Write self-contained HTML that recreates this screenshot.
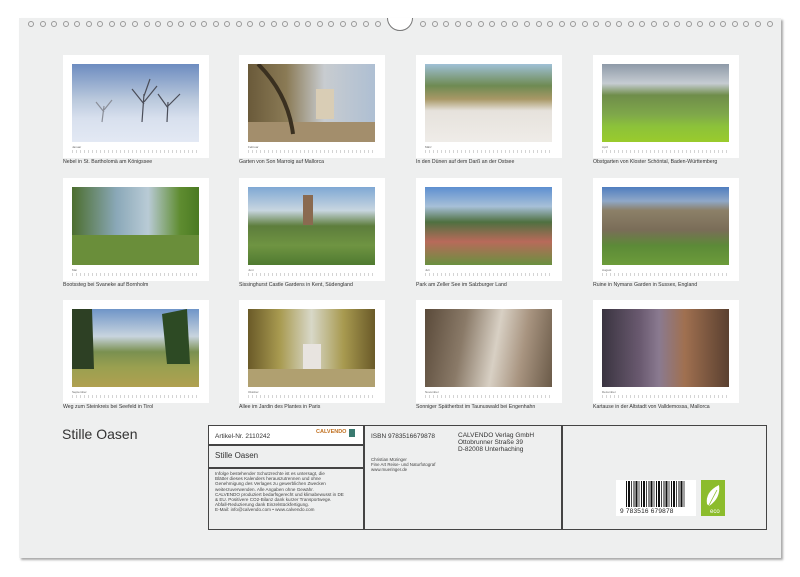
<!DOCTYPE html>
<html><head><meta charset="utf-8"><style>
*{margin:0;padding:0;box-sizing:border-box}
body{width:800px;height:577px;background:#fff;position:relative;overflow:hidden;font-family:"Liberation Sans",sans-serif;color:#333}
.page{position:absolute;left:19px;top:18px;width:762px;height:540px;background:#eeefef;box-shadow:2px 2px 2px #aaa}
.ring{position:absolute;top:21px;width:6px;height:6px;border:1px solid #999;border-radius:50%}
.notch{position:absolute;left:387px;top:5px;width:26px;height:26px;border-radius:50%;border:1px solid #777;background:#fff;clip-path:inset(13px 0 0 0)}
.card{position:absolute;width:146px;height:103px;background:#fff}
.img{position:absolute;left:9px;top:9px;width:127px;height:78px}
.cal{position:absolute;left:9px;top:90px;width:127px;height:9px;font-size:3px;color:#666}
.cal:after{content:"";position:absolute;left:0;right:0;top:5px;height:3px;background:repeating-linear-gradient(90deg,#aaa 0 1px,transparent 1px 4px);opacity:.5}
.cap{position:absolute;font-size:5.2px;color:#333;white-space:nowrap}
.box{position:absolute;border:1.5px solid #444}
.t{position:absolute;white-space:nowrap}
</style></head><body>
<div class="page"></div>
<div id="rings"></div>
<div class="notch"></div>
<script>
let h='';
for(let i=0;i<31;i++){h+=`<div class="ring" style="left:${28+i*11.55}px"></div>`}
for(let i=0;i<31;i++){h+=`<div class="ring" style="left:${420+i*11.55}px"></div>`}
document.getElementById('rings').innerHTML=h;
</script>
<div class="card" style="left:63px;top:55px"><div class="img" style="background:linear-gradient(180deg,#6d8cc0 0%,#b9c8dc 45%,#d8e0ee 70%,#e3e9f4 100%)"><svg width="127" height="78"><g stroke="#4a4d58" fill="none" stroke-width="1.2"><path d="M70 58 L72 30 M72 40 L60 25 M72 38 L85 22 M72 32 L78 15"/><path d="M95 58 L96 38 M96 44 L86 30 M96 42 L108 30"/><path d="M30 58 L32 42 M32 48 L24 38 M32 46 L40 36" stroke="#8a8e98"/></g></svg></div><div class="cal">Januar</div></div>
<div class="cap" style="left:63px;top:159px">Nebel in St. Bartholomä am Königssee</div>

<div class="card" style="left:239px;top:55px"><div class="img" style="background:linear-gradient(90deg,#6a5a3a 0%,#8a7a55 30%,#c8ccd0 60%,#aebfd3 100%)"><svg width="127" height="78"><rect x="68" y="25" width="18" height="30" fill="#d9cdb5"/><rect x="0" y="58" width="127" height="20" fill="#a38e6c"/><path d="M10 0 Q40 30 45 70" stroke="#3a3020" stroke-width="4" fill="none"/></svg></div><div class="cal">Februar</div></div>
<div class="cap" style="left:239px;top:159px">Garten von Son Marroig auf Mallorca</div>

<div class="card" style="left:416px;top:55px"><div class="img" style="background:linear-gradient(180deg,#9fc0d6 0%,#6e8a52 28%,#a89866 45%,#e6e2dc 60%,#efece8 100%)"></div><div class="cal">März</div></div>
<div class="cap" style="left:416px;top:159px">In den Dünen auf dem Darß an der Ostsee</div>

<div class="card" style="left:593px;top:55px"><div class="img" style="background:linear-gradient(180deg,#8e9aa8 0%,#c6ccd2 25%,#6f8d4a 40%,#7fa84a 65%,#8cc23a 80%,#9acb2c 100%)"></div><div class="cal">April</div></div>
<div class="cap" style="left:593px;top:159px">Obstgarten von Kloster Schöntal, Baden-Württemberg</div>

<div class="card" style="left:63px;top:178px"><div class="img" style="background:linear-gradient(90deg,#4c6e2e 0%,#8aa8b8 35%,#b9cbd6 60%,#5f8c30 85%,#4a7a22 100%)"><svg width="127" height="78"><rect y="48" width="127" height="30" fill="#6a8e3a"/></svg></div><div class="cal">Mai</div></div>
<div class="cap" style="left:63px;top:282px">Bootssteg bei Svaneke auf Bornholm</div>

<div class="card" style="left:239px;top:178px"><div class="img" style="background:linear-gradient(180deg,#7fa8d4 0%,#c8d6e0 30%,#5d7d3c 50%,#6f9442 75%,#4f7a30 100%)"><svg width="127" height="78"><rect x="55" y="8" width="10" height="30" fill="#8a6a50"/></svg></div><div class="cal">Juni</div></div>
<div class="cap" style="left:239px;top:282px">Sissinghurst Castle Gardens in Kent, Südengland</div>

<div class="card" style="left:416px;top:178px"><div class="img" style="background:linear-gradient(180deg,#5d8fd0 0%,#a7c0d8 25%,#4f7040 45%,#b86a5a 70%,#6a9040 100%)"></div><div class="cal">Juli</div></div>
<div class="cap" style="left:416px;top:282px">Park am Zeller See im Salzburger Land</div>

<div class="card" style="left:593px;top:178px"><div class="img" style="background:linear-gradient(180deg,#4f7ebf 0%,#8fa8c8 18%,#8c8068 30%,#7a6d58 55%,#5c8a38 75%,#6c9c3a 100%)"></div><div class="cal">August</div></div>
<div class="cap" style="left:593px;top:282px">Ruine in Nymans Garden in Sussex, England</div>

<div class="card" style="left:63px;top:300px"><div class="img" style="background:linear-gradient(180deg,#6f95c8 0%,#c8d4de 35%,#7a9050 55%,#9aa050 75%,#b0a050 100%)"><svg width="127" height="78"><path d="M0 0 L20 0 L22 60 L0 60Z" fill="#2d4024"/><path d="M90 5 L115 0 L118 55 L95 55Z" fill="#2d4a24"/></svg></div><div class="cal">September</div></div>
<div class="cap" style="left:63px;top:404px">Weg zum Steinkreis bei Seefeld in Tirol</div>

<div class="card" style="left:239px;top:300px"><div class="img" style="background:linear-gradient(90deg,#6a5a28 0%,#a89a50 25%,#d8d8c8 50%,#a89a50 75%,#6a5a28 100%)"><svg width="127" height="78"><rect x="55" y="35" width="18" height="25" fill="#e8e4e0"/><rect y="60" width="127" height="18" fill="#b0a070"/></svg></div><div class="cal">Oktober</div></div>
<div class="cap" style="left:239px;top:404px">Allee im Jardin des Plantes in Paris</div>

<div class="card" style="left:416px;top:300px"><div class="img" style="background:linear-gradient(100deg,#5a4a3a 0%,#8a7a68 30%,#d8d0c4 55%,#a89480 75%,#6a5a48 100%)"></div><div class="cal">November</div></div>
<div class="cap" style="left:416px;top:404px">Sonniger Spätherbst im Taunuswald bei Engenhahn</div>

<div class="card" style="left:593px;top:300px"><div class="img" style="background:linear-gradient(90deg,#3a3440 0%,#6a5a70 30%,#8a7a90 45%,#a07050 65%,#5a4030 100%)"></div><div class="cal">Dezember</div></div>
<div class="cap" style="left:593px;top:404px">Kartause in der Altstadt von Valldemossa, Mallorca</div>

<div class="t" style="left:62px;top:426px;font-size:14px;color:#333">Stille Oasen</div>
<div class="box" style="left:208px;top:425px;width:559px;height:105px"></div>
<div style="position:absolute;left:363px;top:425px;width:1.5px;height:105px;background:#444"></div>
<div style="position:absolute;left:561px;top:425px;width:1.5px;height:105px;background:#444"></div>
<div style="position:absolute;left:208px;top:444px;width:156px;height:1.5px;background:#444"></div>
<div style="position:absolute;left:208px;top:467px;width:156px;height:1.5px;background:#444"></div>
<div style="position:absolute;left:209px;top:426px;width:154px;height:18px;background:#fff"></div>
<div class="t" style="left:215px;top:433px;font-size:6.5px">Artikel-Nr. 2110242</div>
<div class="t" style="left:316px;top:429px;font-size:5.5px;color:#c07020;font-weight:bold">CALVENDO</div>
<div style="position:absolute;left:349px;top:429px;width:6px;height:8px;background:#3a7a70"></div>
<div class="t" style="left:215px;top:451px;font-size:8px">Stille Oasen</div>
<div style="position:absolute;left:215px;top:471px;font-size:4.6px;line-height:5.2px;color:#444">Infolge bestehender Schutzrechte ist es untersagt, die<br>Blätter dieses Kalenders herauszutrennen und ohne<br>Genehmigung des Verlages zu gewerblichen Zwecken<br>weiterzuverwenden. Alle Angaben ohne Gewähr.<br>CALVENDO produziert bedarfsgerecht und klimabewusst in DE<br>&amp; EU. Positivere CO2-Bilanz dank kurzer Transportwege.<br>Abfall-Reduzierung dank Einzelstückfertigung.<br>E-Mail: info@calvendo.com • www.calvendo.com</div>
<div class="t" style="left:371px;top:433px;font-size:6.5px">ISBN 9783516679878</div>
<div style="position:absolute;left:458px;top:432px;font-size:6.5px;line-height:7px">CALVENDO Verlag GmbH<br>Ottobrunner Straße 39<br>D-82008 Unterhaching</div>
<div style="position:absolute;left:371px;top:458px;font-size:4.4px;line-height:4.8px;color:#444">Christian Müringer<br>Fine Art Reise- und Naturfotograf<br>www.mueringer.de</div>
<div style="position:absolute;left:616px;top:480px;width:80px;height:36px;background:#fff"></div>
<div style="position:absolute;left:626px;top:481px;width:60px;height:26px;background:repeating-linear-gradient(90deg,#111 0 1px,#fff 1px 2px,#111 2px 4px,#fff 4px 5px,#444 5px 6px,#fff 6px 7.5px)"></div>
<div class="t" style="left:620px;top:508px;font-size:6.5px;color:#222;letter-spacing:0.2px;background:#fff">9 783516 679878</div>
<div style="position:absolute;left:701px;top:480px;width:24px;height:36px;background:#8cbc2c"></div>
<svg style="position:absolute;left:701px;top:480px" width="24" height="36"><path d="M6 24 Q4 12 18 5 Q20 18 8 26Z" fill="#fff"/><path d="M7 27 L16 10" stroke="#8cbc2c" stroke-width="0.8"/><text x="9" y="33" font-size="6" fill="#fff" font-family="Liberation Sans">eco</text></svg>
</body></html>
